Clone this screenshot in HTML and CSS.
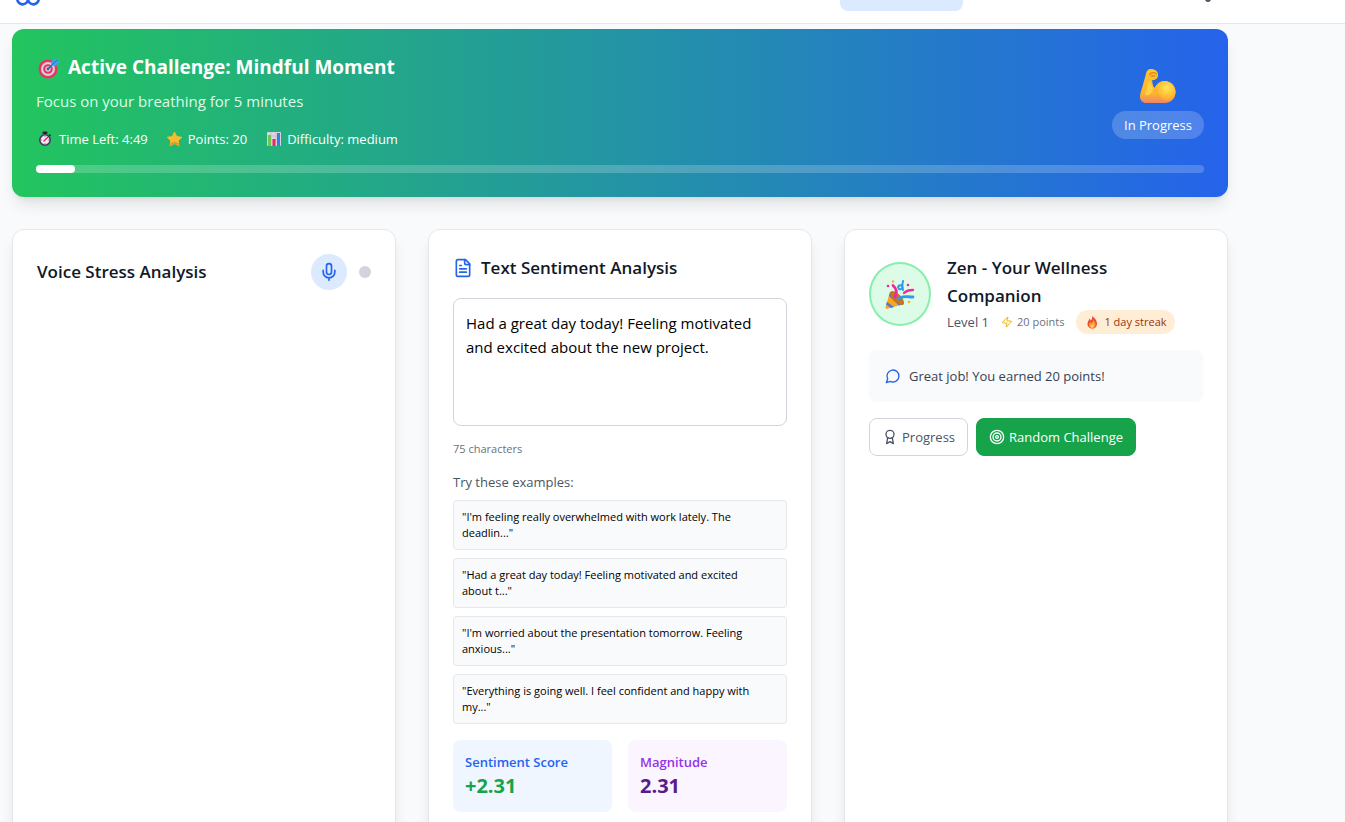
FILE: index.html
```html
<!DOCTYPE html>
<html lang="en">
<head>
    <meta charset="UTF-8">
    <meta name="viewport" content="width=device-width, initial-scale=1.0">
    <title>Wellness Dashboard</title>
    <link rel="stylesheet" href="styles.css">
</head>
<body>
    <header class="top-bar">
        <div class="top-bar-inner">
            <a href="#" class="logo" aria-label="Home">
                <svg class="icon" width="32" height="32" viewBox="0 0 24 24"><path d="M12 5a3 3 0 1 0-5.997.125 4 4 0 0 0-2.526 5.77 4 4 0 0 0 .556 6.588A4 4 0 1 0 12 18Z"/><path d="M12 5a3 3 0 1 1 5.997.125 4 4 0 0 1 2.526 5.77 4 4 0 0 1-.556 6.588A4 4 0 1 1 12 18Z"/></svg>
            </a>
            <nav class="top-nav">
                <a href="#" class="nav-link active" aria-label="Dashboard"></a>
                <button type="button" class="bell-button" aria-label="Notifications">
                    <svg class="icon" width="24" height="24" viewBox="0 0 24 24"><path d="M6 8a6 6 0 0 1 12 0c0 7 3 9 3 9H3s3-2 3-9"/><path d="M10.3 21a1.94 1.94 0 0 0 3.4 0"/></svg>
                </button>
            </nav>
        </div>
    </header>

    <main class="content">
        <section class="challenge">
            <div class="challenge-top">
                <div class="challenge-info">
                    <h2 class="challenge-title">
                        <svg width="24" height="24" viewBox="0 0 24 24">
                            <circle cx="12" cy="14" r="9.500" fill="#e6355f"/>
                            <circle cx="12" cy="14" r="7" fill="#d9cfe0"/>
                            <circle cx="12" cy="14" r="4.800" fill="#e6355f"/>
                            <circle cx="12" cy="14" r="2.700" fill="#d9cfe0"/>
                            <circle cx="12" cy="14" r="1.400" fill="#c92a52"/>
                            <path d="M12 14l6-6" stroke="#1f6fb8" stroke-width="1.600"/>
                            <path d="M15 10.500V7l4-4 .8 3.200L23.500 7l-4 4z" fill="#3ba3ee"/>
                            <path d="M16 10l5-5" stroke="#1674c4" stroke-width="1"/>
                        </svg>
                        Active Challenge: Mindful Moment
                    </h2>
                    <p class="challenge-text">Focus on your breathing for 5 minutes</p>
                    <div class="challenge-stats">
                        <span class="stat">
                            <svg width="18" height="18" viewBox="0 0 18 18">
                                <rect x="6.500" y="1.500" width="5" height="2.500" rx="1" fill="#2b2440"/>
                                <rect x="8" y="3" width="2" height="3" fill="#2b2440"/>
                                <path d="M13 4.500l1.600 1.600" stroke="#2b2440" stroke-width="1.600"/>
                                <circle cx="9" cy="10" r="5.200" fill="#eee6f3" stroke="#493a5b" stroke-width="1.600"/>
                                <path d="M9 6v1M9 13v1M5 10h1M12 10h1" stroke="#75687f" stroke-width=".8"/>
                                <path d="M8 11l3.500-3.500" stroke="#e5234f" stroke-width="1.300" stroke-linecap="round"/>
                            </svg>
                            Time Left: 4:49
                        </span>
                        <span class="stat">
                            <svg width="18" height="18" viewBox="0 0 18 18">
                                <path d="M9.500 2l2.200 4.600 5 .7-3.600 3.500.9 5-4.500-2.400-4.500 2.400.9-5-3.600-3.500 5-.7z" fill="#f3bd2f" stroke="#f3bd2f" stroke-linejoin="round"/>
                                <path d="M5 15.800l4.500-2.400 4.500 2.400-.4-2.300-4.100-2-4 2z" fill="#e4932c"/>
                            </svg>
                            Points: 20
                        </span>
                        <span class="stat">
                            <svg width="18" height="18" viewBox="0 0 18 18">
                                <rect x="3" y="2" width="14" height="14" rx="1" fill="#dcd5e4"/>
                                <path d="M3 6h14M3 10h14M7 2v14M12 2v14" stroke="#bdb4c9" stroke-width=".6"/>
                                <rect x="4" y="5" width="3" height="11" fill="#72c650"/>
                                <rect x="8.500" y="9" width="3" height="7" fill="#e8285e"/>
                                <rect x="13" y="3" width="3" height="13" fill="#2f83dc"/>
                            </svg>
                            Difficulty: medium
                        </span>
                    </div>
                </div>
                <div class="challenge-status">
                    <svg width="40" height="40" viewBox="0 0 40 40">
                        <defs>
                            <linearGradient id="arm" x1="0" y1="0" x2="0" y2="1">
                                <stop offset="0" stop-color="#ffc62e"/>
                                <stop offset=".7" stop-color="#ffb52b"/>
                                <stop offset="1" stop-color="#ee8668"/>
                            </linearGradient>
                            <radialGradient id="biceps" cx=".6" cy=".35" r=".7">
                                <stop offset="0" stop-color="#ffe65c"/>
                                <stop offset=".65" stop-color="#ffb92c"/>
                                <stop offset="1" stop-color="#ffa333" stop-opacity=".5"/>
                            </radialGradient>
                        </defs>
                        <path d="M8.500 9C9.500 6.500 11.500 5.500 14 6c3.500.5 6 2.500 6 5.500 0 3.200-1.500 5.500-5 5.500l-.8.200c0 3 .8 5.800 2.300 7.800 2.500-4.500 6-7 10-7 6.500 0 11 5 11 11 0 6.500-4.500 11-11 11H8.500C4.500 40 2 37.500 2 33.500 2 30.500 4.500 24 6 18z" fill="url(#arm)"/>
                        <path d="M16 26c2.500-5 6.500-8 10.500-8 6.500 0 11 5 11 11 0 5-3.500 9-8 9-5 0-7-5-13.500-12z" fill="url(#biceps)"/>
                        <path d="M11 17c-1 5-3 11-4 14 2 3 6 1 8-4 0-3-2-6-4-10z" fill="#ffe154" opacity=".65"/>
                        <path d="M11.500 11.500c1.500-2 4.500-2.500 7-.5M13 13h4" stroke="#e08a20" stroke-width="1.300" fill="none" stroke-linecap="round"/>
                    </svg>
                    <span class="status-pill">In Progress</span>
                </div>
            </div>
            <div class="progress-track">
                <div class="progress-fill" style="width: 3.35%"></div>
            </div>
        </section>

        <div class="card-grid">
            <section class="card">
                <div class="voice-header">
                    <h3 class="card-title">Voice Stress Analysis</h3>
                    <div class="voice-controls">
                        <button type="button" class="mic-button" aria-label="Start recording">
                            <svg class="icon" width="20" height="20" viewBox="0 0 24 24"><path d="M12 2a3 3 0 0 0-3 3v7a3 3 0 0 0 6 0V5a3 3 0 0 0-3-3Z"/><path d="M19 10v2a7 7 0 0 1-14 0v-2M12 19v3"/></svg>
                        </button>
                        <span class="status-dot"></span>
                    </div>
                </div>
            </section>

            <section class="card">
                <div class="text-header">
                    <svg class="icon" width="20" height="20" viewBox="0 0 24 24"><path d="M15 2H6a2 2 0 0 0-2 2v16a2 2 0 0 0 2 2h12a2 2 0 0 0 2-2V7Z"/><path d="M14 2v4a2 2 0 0 0 2 2h4M10 9H8M16 13H8M16 17H8"/></svg>
                    <h3 class="card-title"><label for="entry">Text Sentiment Analysis</label></h3>
                </div>
                <textarea id="entry" class="entry">Had a great day today! Feeling motivated and excited about the new project.</textarea>
                <p class="char-count">75 characters</p>
                <p class="examples-title">Try these examples:</p>
                <div class="examples">
                    <button type="button" class="example">"I'm feeling really overwhelmed with work lately. The deadlin..."</button>
                    <button type="button" class="example">"Had a great day today! Feeling motivated and excited about t..."</button>
                    <button type="button" class="example">"I'm worried about the presentation tomorrow. Feeling anxious..."</button>
                    <button type="button" class="example">"Everything is going well. I feel confident and happy with my..."</button>
                </div>
                <div class="metrics">
                    <div class="metric score">
                        <div class="metric-name">Sentiment Score</div>
                        <div class="metric-value">+2.31</div>
                    </div>
                    <div class="metric magnitude">
                        <div class="metric-name">Magnitude</div>
                        <div class="metric-value">2.31</div>
                    </div>
                </div>
            </section>

            <section class="card">
                <div class="companion">
                    <div class="avatar">
                        <svg width="32" height="32" viewBox="0 0 32 32">
                            <path d="M6 14L1.500 29c-.3 1.300.7 2 1.800 1.700L20 26z" fill="#f5a623"/>
                            <path d="M5 18l10 9.500 5-1.500L6 14zM3 24l7 5-3 .9-5-3.500z" fill="#4c78dc"/>
                            <ellipse cx="13" cy="20" rx="4" ry="9" transform="rotate(-46 13 20)" fill="#c8741e"/>
                            <path d="M11 19c2-4 2-8-2-11.500" stroke="#f0289a" stroke-width="2.800" fill="none" stroke-linecap="round"/>
                            <path d="M14 21c4-4 9-2 15-2" stroke="#2d9bea" stroke-width="2.800" fill="none" stroke-linecap="round"/>
                            <path d="M20 15c2-2 5-3 9-3" stroke="#f0289a" stroke-width="2.300" fill="none" stroke-linecap="round"/>
                            <path d="M19 3c-1 3-1 6 0 9M18 8c-3-2-5 1-3 3 2 1 4-1 3-3" stroke="#2d9bea" stroke-width="2" fill="none" stroke-linecap="round"/>
                            <circle cx="4" cy="8" r="1.300" fill="#f0289a"/><circle cx="24" cy="7" r="1.300" fill="#f0289a"/>
                            <circle cx="9" cy="3.500" r="1.300" fill="#f5b22e"/><circle cx="25" cy="24" r="1.300" fill="#f5b22e"/>
                        </svg>
                    </div>
                    <div class="companion-info">
                        <h3 class="card-title">Zen - Your Wellness Companion</h3>
                        <div class="companion-stats">
                            <span class="level">Level 1</span>
                            <span class="points">
                                <svg class="icon" width="12" height="12" viewBox="0 0 24 24"><path d="M4 14a1 1 0 0 1-.78-1.630l9.900-10.200a.5.5 0 0 1 .86.460l-1.920 6.020A1 1 0 0 0 13 10h7a1 1 0 0 1 .78 1.630l-9.900 10.200a.5.5 0 0 1-.86-.46l1.920-6.020A1 1 0 0 0 11 14z"/></svg>
                                20 points
                            </span>
                            <span class="streak">
                                <svg width="16" height="16" viewBox="0 0 16 16">
                                    <path d="M8 2c2.500 1.500 5 4.500 5 7.500 0 3-2 5-4.700 5S3.500 12.500 3.500 10c0-2.500 1.500-4 2-5.500.8.500 1 1.200 1.200 2C8 5.500 8.500 4 8 2z" fill="#ee4b37"/>
                                    <path d="M9 6c1.500 1.500 3 3.300 2.500 5.500-.5 1.800-1.800 2.500-3.300 2.500C6 14 5 12.500 5 11s1-2.300 1.500-3c.5.700.7 1 .8 1.500C8.500 8.500 9 7.500 9 6z" fill="#fa9f34"/>
                                    <path d="M8.300 10c1.200 1 1.700 1.800 1.400 2.800-.5 1.500-2.800 1.500-3.100 0-.2-1.200 1-1.800 1.700-2.800z" fill="#ffd057"/>
                                </svg>
                                1 day streak
                            </span>
                        </div>
                    </div>
                </div>
                <div class="message">
                    <svg class="icon" width="16" height="16" viewBox="0 0 24 24"><path d="M7.900 20A9 9 0 1 0 4 16.100L2 22Z"/></svg>
                    Great job! You earned 20 points!
                </div>
                <div class="actions">
                    <button type="button" class="action">
                        <svg class="icon" width="16" height="16" viewBox="0 0 24 24"><circle cx="12" cy="8" r="6"/><path d="M15.477 12.890L17 22l-5-3-5 3 1.523-9.110"/></svg>
                        Progress
                    </button>
                    <button type="button" class="action primary">
                        <svg class="icon" width="16" height="16" viewBox="0 0 24 24"><circle cx="12" cy="12" r="10"/><circle cx="12" cy="12" r="6"/><circle cx="12" cy="12" r="2"/></svg>
                        Random Challenge
                    </button>
                </div>
            </section>
        </div>
    </main>
</body>
</html>
```
FILE: styles.css
```css
* {
    box-sizing: border-box;
}

body {
    margin: 0;
    font-family: "Segoe UI", "Open Sans", "Noto Sans", sans-serif;
    font-size: 15px;
    line-height: 24px;
    background-color: #f9fafb;
    color: #111827;
}

h2,
h3,
p {
    margin: 0;
}

button,
textarea {
    font-family: inherit;
}

button {
    cursor: pointer;
}

svg {
    display: block;
    flex-shrink: 0;
}

.icon {
    fill: none;
    stroke: currentColor;
    stroke-width: 2;
    stroke-linecap: round;
    stroke-linejoin: round;
}

/* the bar is scrolled mostly out of view */
.top-bar {
    height: 65px;
    margin-top: -41px;
    background-color: white;
    border-bottom: 1px solid #e5e7eb;
}

.top-bar-inner {
    display: flex;
    justify-content: space-between;
    align-items: center;
    height: 64px;
    max-width: 1240px;
    padding: 0 8px 0 12px;
}

.logo {
    color: #2563eb;
}

.top-nav {
    display: flex;
    justify-content: space-between;
    align-items: center;
    width: 392px;
}

.nav-link {
    width: 123px;
    height: 40px;
    border-radius: 8px;
}

.nav-link.active {
    background-color: #dbeafe;
}

.bell-button {
    padding: 8px;
    margin-right: 4px;
    border: none;
    background: none;
    color: #4b5563;
}

.content {
    max-width: 1240px;
    padding: 5px 12px 32px;
}

.challenge {
    padding: 24px;
    margin-bottom: 32px;
    border-radius: 12px;
    background: linear-gradient(to right, #22c55e, #2563eb);
    color: white;
    box-shadow: 0 10px 15px -3px rgba(0, 0, 0, 0.1), 0 4px 6px -4px rgba(0, 0, 0, 0.1);
}

.challenge-top {
    display: flex;
    justify-content: space-between;
    align-items: center;
}

.challenge-title {
    display: flex;
    align-items: center;
    gap: 8px;
    margin-bottom: 8px;
    font-size: 19px;
    line-height: 28px;
    font-weight: 700;
}

.challenge-text {
    color: #dcfce7;
}

.challenge-stats {
    display: flex;
    gap: 17px;
    margin-top: 16px;
    font-size: 13px;
    line-height: 20px;
}

.stat {
    display: flex;
    align-items: center;
    gap: 5px;
}

.challenge-status {
    display: flex;
    flex-direction: column;
    align-items: center;
    gap: 8px;
}

.status-pill {
    padding: 4px 12px;
    border-radius: 14px;
    background-color: rgba(255, 255, 255, 0.2);
    font-size: 13px;
    line-height: 20px;
}

.progress-track {
    height: 8px;
    margin-top: 16px;
    border-radius: 4px;
    background-color: rgba(255, 255, 255, 0.2);
}

.progress-fill {
    height: 8px;
    border-radius: 4px;
    background-color: white;
}

.card-grid {
    display: grid;
    grid-template-columns: repeat(3, minmax(0, 1fr));
    gap: 32px;
}

.card {
    padding: 24px;
    border: 1px solid #e5e7eb;
    border-radius: 12px;
    background-color: white;
    box-shadow: 0 10px 15px -3px rgba(0, 0, 0, 0.1), 0 4px 6px -4px rgba(0, 0, 0, 0.1);
}

.card-title {
    font-size: 17px;
    line-height: 28px;
    font-weight: 600;
}

.voice-header {
    display: flex;
    justify-content: space-between;
    align-items: center;
}

.voice-controls {
    display: flex;
    align-items: center;
    gap: 12px;
}

.mic-button {
    padding: 8px;
    border: none;
    border-radius: 50%;
    background-color: #dbeafe;
    color: #2563eb;
}

.status-dot {
    width: 12px;
    height: 12px;
    border-radius: 50%;
    background-color: #d1d5db;
}

.text-header {
    display: flex;
    align-items: center;
    gap: 8px;
    margin-bottom: 16px;
}

.text-header .icon {
    color: #2563eb;
}

.entry {
    display: block;
    width: 100%;
    height: 128px;
    padding: 12px;
    border: 1px solid #d1d5db;
    border-radius: 8px;
    background-color: white;
    color: black;
    font-size: 15px;
    line-height: 24px;
    resize: none;
}

.char-count {
    margin: 15px 0;
    color: #6b7280;
    font-size: 11px;
    line-height: 16px;
}

.examples-title {
    margin-bottom: 8px;
    color: #4b5563;
    font-size: 13px;
    line-height: 20px;
}

.examples {
    display: flex;
    flex-direction: column;
    gap: 8px;
}

.example {
    padding: 8px 24px 8px 8px;
    border: 1px solid #e5e7eb;
    border-radius: 4px;
    background-color: #f9fafb;
    color: black;
    font-size: 11px;
    line-height: 16px;
    text-align: left;
}

.metrics {
    display: grid;
    grid-template-columns: 1fr 1fr;
    gap: 16px;
    margin-top: 16px;
}

.metric {
    padding: 12px;
    border-radius: 8px;
}

.metric-name {
    font-size: 13px;
    line-height: 20px;
    font-weight: 600;
}

.metric-value {
    font-size: 20px;
    line-height: 28px;
    font-weight: 700;
}

.score {
    background-color: #eff6ff;
    color: #2563eb;
}

.score .metric-value {
    color: #16a34a;
}

.magnitude {
    background-color: #faf5ff;
    color: #9333ea;
}

.magnitude .metric-value {
    color: #581c87;
}

.companion {
    display: flex;
    align-items: center;
    gap: 16px;
    margin-bottom: 16px;
}

.avatar {
    display: flex;
    align-items: center;
    justify-content: center;
    flex-shrink: 0;
    width: 62px;
    height: 64px;
    border: 2px solid #86efac;
    border-radius: 50%;
    background-color: #dcfce7;
}

.companion-stats {
    display: flex;
    align-items: center;
    gap: 12px;
    white-space: nowrap;
}

.level {
    color: #4b5563;
    font-size: 13px;
}

.points {
    display: flex;
    align-items: center;
    gap: 4px;
    color: #6b7280;
    font-size: 11px;
}

.points .icon {
    color: #eab308;
}

.streak {
    display: flex;
    align-items: center;
    gap: 4px;
    padding: 4px 8px;
    border-radius: 12px;
    background-color: #ffedd5;
    color: #9a3412;
    font-size: 11px;
    line-height: 16px;
}

.message {
    display: flex;
    align-items: center;
    gap: 8px;
    padding: 16px;
    margin-bottom: 16px;
    border-radius: 8px;
    background-color: #f9fafb;
    color: #374151;
    font-size: 13px;
    line-height: 20px;
}

.message .icon {
    color: #2563eb;
}

.actions {
    display: flex;
    gap: 8px;
}

.action {
    display: flex;
    align-items: center;
    gap: 4px;
    padding: 8px 12px;
    border: 1px solid #d1d5db;
    border-radius: 8px;
    background-color: white;
    color: #4b5563;
    font-size: 13px;
    line-height: 20px;
}

.action.primary {
    border-color: #16a34a;
    background-color: #16a34a;
    color: white;
}
```
